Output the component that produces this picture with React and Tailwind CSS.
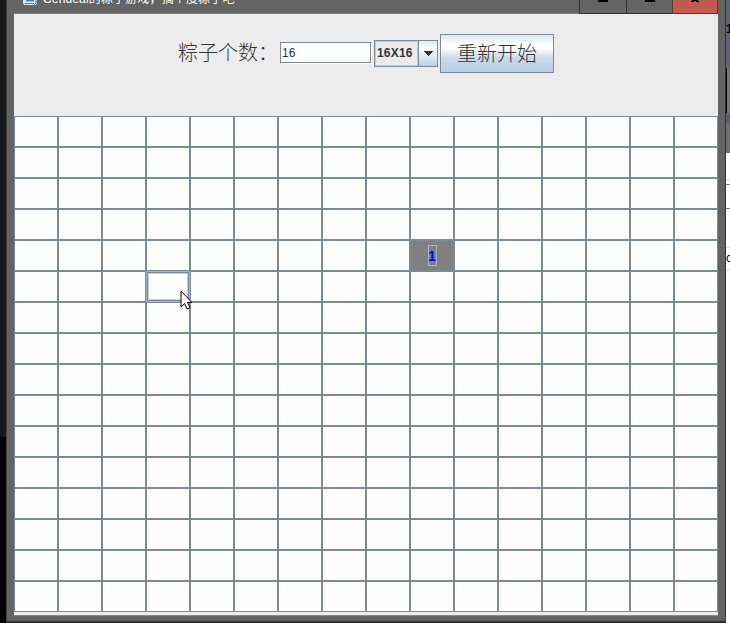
const cells = Array.from({ length: 256 }, (_, i) => i);

function Cell({ index }) {
  const base = 'h-[31px] border border-[#7a8a99]';
  if (index === 73) {
    return (
      <div className={`${base} flex items-center justify-center bg-[#808080]`}>
        <span className="flex h-[21px] w-[9px] items-center justify-center border border-[#a3b8cc] text-[14px] font-bold leading-none text-[#0000ff]">1</span>
      </div>
    );
  }
  if (index === 83) {
    return (
      <div className="h-[31px] border border-[#a3b8cc]">
        <div className="h-full border border-[#7a8a99]">
          <div className="h-full border border-[#b8cfe5] bg-white" />
        </div>
      </div>
    );
  }
  return <div className={`${base} bg-[#fefefe]`} />;
}

function TitleBar() {
  return (
    <div className="flex h-[14px] shrink-0 overflow-hidden">
      <div className="flex h-[14px] flex-1 overflow-hidden border-b border-[#74808a] pl-[9px]">
        <svg className="h-[5px] w-[15px] shrink-0" viewBox="0 0 15 5">
          <path d="M0 0h14v2l-1 3H1L0 3Z" fill="#dce8ef" />
          <path d="M3 0h8v1.5H3Z M2 3h9v1H2Z" fill="#537f9b" />
          <path d="M13 0v3l-2 2" fill="none" stroke="#39769a" />
        </svg>
        <span className="-mt-[9px] ml-[5px] whitespace-nowrap text-[12px] leading-[17px] tracking-[0.15px] text-white">Cendeal的粽子游戏，搞个度粽子吧</span>
      </div>
      <div className="flex w-[47px] justify-center border-b border-l border-[#333]">
        <div className="h-[2px] w-[10px] bg-black" />
      </div>
      <div className="flex w-[46px] justify-center border-b border-l border-[#333]">
        <div className="h-[2px] w-[10px] bg-black" />
      </div>
      <div className="flex w-[46px] justify-center border-x border-b border-[#6b302c] bg-[#c35a50]">
        <svg className="h-[2px] w-[10px]" viewBox="0 0 10 2">
          <path d="M2 0h6v1h1v1H6V1H4v1H1V1h1Z" fill="#000" />
        </svg>
      </div>
    </div>
  );
}

function Toolbar() {
  return (
    <div className="flex h-[102px] shrink-0 items-start bg-[#ececec] pl-[164px] pt-[20px] text-[#333]">
      <span className="mt-[4px] w-[102px] whitespace-nowrap font-['Noto_Sans_CJK_SC',sans-serif] text-[20px] font-light leading-[28px]">粽子个数：</span>
      <div className="mt-[8px] h-[22px] w-[92px] border border-b-white border-r-white border-[#7a8a99]">
        <div className="flex h-full items-center border-b border-r border-[#7a8a99] bg-white pl-px text-[12px]">16</div>
      </div>
      <div className="ml-[2px] mt-[6px] flex h-[27px] w-[64px] border border-[#7a8a99]">
        <div className="flex w-[43px] items-center border border-[#b8cfe5] pl-px pb-px text-[12px] font-bold tracking-[0.2px]">16X16</div>
        <div className="flex flex-1 items-center justify-center border-l border-[#7a8a99] bg-linear-to-b from-[#dde8f3] via-white via-30% to-[#b8cfe5]">
          <svg className="h-[5px] w-[10px]" viewBox="0 0 10 5" shapeRendering="crispEdges">
            <path d="M0 0h10L5 5Z" fill="#333" />
          </svg>
        </div>
      </div>
      <div className="ml-[2px] flex h-[39px] w-[114px] items-center justify-center border border-[#7a8a99] bg-[linear-gradient(#dde8f3,#ffffff_28%,#ffffff_36%,#c8d9ea_62%,#b8cfe5)] pb-[2px] font-['Noto_Sans_CJK_SC',sans-serif] text-[20px] font-light">重新开始</div>
    </div>
  );
}

export default function App() {
  return (
    <div className="flex h-[623px] w-[730px] overflow-hidden bg-[#2b2a2e] font-['Liberation_Sans','Noto_Sans_CJK_SC',sans-serif]">
      <div className="flex w-[6px] flex-col bg-black">
        <div className="h-[437px] bg-[#18191b]" />
      </div>
      <div className="flex h-[622px] w-[720px] flex-col border-x border-b border-b-[#333] border-l-[#444] border-r-[#333] bg-[#646464] px-[7px]">
        <TitleBar />
        <Toolbar />
        <div className="grid w-[704px] grid-cols-[repeat(16,44px)]">
          {cells.map((i) => <Cell key={i} index={i} />)}
        </div>
        <div className="h-[4px] shrink-0 border-b border-[#7a8a99] bg-[#ececec]" />
      </div>
      <div className="flex w-[4px] flex-col overflow-hidden bg-white">
        <div className="h-[68px] shrink-0 bg-[#62617b] pt-[22px] text-[12px] font-bold leading-[14px] text-black">1</div>
        <div className="h-[45px] shrink-0 border-l border-black bg-[#777]" />
        <div className="h-[10px] shrink-0 bg-[#5d5b72]" />
        <div className="h-[30px] shrink-0 bg-[#707070]" />
        <div className="h-[27px] shrink-0 border-b border-[#ddd]" />
        <div className="h-[5px] shrink-0 border-b border-[#777]" />
        <div className="h-[24px] shrink-0 border-b border-[#777]" />
        <div className="h-[39px] shrink-0 border-b border-[#ddd]" />
        <div className="h-[22px] shrink-0 border-b border-[#ddd] text-[12px] leading-[21px] text-black">c</div>
      </div>
      <svg className="absolute left-[180px] top-[290px] h-[21px] w-[13px]" viewBox="0 0 13 21">
        <path d="M1 1v16l3.5-3.5 2.5 5.5 3-1.5-2.5-5H12Z" fill="#fff" stroke="#000" />
      </svg>
    </div>
  );
}
